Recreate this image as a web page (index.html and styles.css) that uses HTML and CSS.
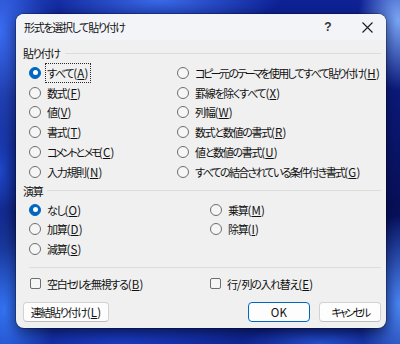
FILE: index.html
```html
<!DOCTYPE html>
<html lang="ja">

<head>
    <meta charset="UTF-8" />
    <title>形式を選択して貼り付け</title>
    <link rel="stylesheet" href="styles.css">
</head>

<body>
    <div class="dialog">
        <div class="titlebar">
            <span class="title">形式を選択して貼り付け</span>
            <span class="help">?</span>
            <span class="close">
                <svg width="11" height="11" viewBox="0 0 11 11">
                    <path d="M0.5 0.5 L10.5 10.5 M10.5 0.5 L0.5 10.5" stroke="#1b1b1b" stroke-width="1.1" fill="none" />
                </svg>
            </span>
        </div>

        <div class="content">
            <div class="group-head">貼り付け</div>
            <div class="paste-grid">
                <div class="opt"><span class="radio checked"></span><span class="focus">すべて<span class="key">(<u>A</u>)</span></span></div>
                <div class="opt"><span class="radio"></span><span>数式<span class="key">(<u>F</u>)</span></span></div>
                <div class="opt"><span class="radio"></span><span>値<span class="key">(<u>V</u>)</span></span></div>
                <div class="opt"><span class="radio"></span><span>書式<span class="key">(<u>T</u>)</span></span></div>
                <div class="opt"><span class="radio"></span><span><span class="kata">コメント</span>と<span class="kata">メモ</span><span class="key">(<u>C</u>)</span></span></div>
                <div class="opt"><span class="radio"></span><span>入力規則<span class="key">(<u>N</u>)</span></span></div>
                <div class="opt"><span class="radio"></span><span class="long"><span class="kata">コピー</span>元の<span class="kata">テーマ</span>を使用してすべて貼り付け<span class="key">(<u>H</u>)</span></span></div>
                <div class="opt"><span class="radio"></span><span>罫線を除くすべて<span class="key">(<u>X</u>)</span></span></div>
                <div class="opt"><span class="radio"></span><span>列幅<span class="key">(<u>W</u>)</span></span></div>
                <div class="opt"><span class="radio"></span><span>数式と数値の書式<span class="key">(<u>R</u>)</span></span></div>
                <div class="opt"><span class="radio"></span><span>値と数値の書式<span class="key">(<u>U</u>)</span></span></div>
                <div class="opt"><span class="radio"></span><span class="long">すべての結合されている条件付き書式<span class="key">(<u>G</u>)</span></span></div>
            </div>

            <div class="group-head op-head">演算</div>
            <div class="op-grid">
                <div class="opt"><span class="radio checked"></span><span>なし<span class="key">(<u>O</u>)</span></span></div>
                <div class="opt"><span class="radio"></span><span>加算<span class="key">(<u>D</u>)</span></span></div>
                <div class="opt"><span class="radio"></span><span>減算<span class="key">(<u>S</u>)</span></span></div>
                <div class="opt"><span class="radio"></span><span>乗算<span class="key">(<u>M</u>)</span></span></div>
                <div class="opt"><span class="radio"></span><span>除算<span class="key">(<u>I</u>)</span></span></div>
            </div>

            <div class="separator"></div>

            <div class="check-row">
                <div class="opt"><span class="checkbox"></span><span>空白<span class="kata">セル</span>を無視する<span class="key">(<u>B</u>)</span></span></div>
                <div class="opt"><span class="checkbox"></span><span>行<span class="key">/</span>列の入れ替え<span class="key">(<u>E</u>)</span></span></div>
            </div>

            <div class="button-row">
                <button class="btn link-btn">連結貼り付け<span class="key">(<u>L</u>)</span></button>
                <span class="spacer"></span>
                <button class="btn default"><span class="key">OK</span></button>
                <button class="btn"><span class="kata">キャンセル</span></button>
            </div>
        </div>
    </div>
</body>

</html>
```

FILE: styles.css
```css
* {
    box-sizing: border-box;
    margin: 0;
    padding: 0;
}

html,
body {
    width: 400px;
    height: 344px;
    overflow: hidden;
}

body {
    font-family: 'Noto Sans CJK JP', 'Noto Sans', sans-serif;
    font-feature-settings: "palt";
    font-size: 11px;
    letter-spacing: -1.3px;
    color: #111111;
    background-color: #0b1a72;
    background-image:
        radial-gradient(ellipse 60px 120px at 0px 30px, #3a6cf0 0%, rgba(40, 90, 230, 0) 100%),
        radial-gradient(ellipse 50px 100px at 4px 310px, #3474f4 0%, rgba(40, 90, 230, 0) 100%),
        radial-gradient(ellipse 30px 80px at 0px 170px, #1f47c8 0%, rgba(30, 70, 200, 0) 100%),
        radial-gradient(ellipse 40px 70px at 398px 20px, #7aa6f5 0%, rgba(80, 130, 240, 0) 100%),
        radial-gradient(ellipse 40px 90px at 400px 305px, #4a86f5 0%, rgba(60, 110, 240, 0) 100%),
        radial-gradient(ellipse 120px 30px at 160px 0px, #3a6ae8 0%, rgba(40, 90, 220, 0) 100%),
        radial-gradient(ellipse 160px 30px at 120px 344px, #1a3cc0 0%, rgba(20, 50, 180, 0) 100%),
        radial-gradient(ellipse 80px 20px at 320px 344px, #2450d0 0%, rgba(20, 50, 180, 0) 100%),
        linear-gradient(180deg, #0e2296 0%, #07105a 60%, #0c1f86 100%);
}

.dialog {
    margin: 14px 0 0 16px;
    width: 370px;
    height: 314px;
    border-radius: 8px;
    background: #f0f0f0;
    box-shadow: 0 4px 14px rgba(0, 0, 0, 0.45), 0 0 0 1px rgba(0, 0, 0, 0.25);
    overflow: hidden;
    display: flex;
    flex-direction: column;
}

.titlebar {
    height: 26px;
    background: #f3f4f8;
    display: flex;
    align-items: center;
    padding-left: 8px;
}

.title {
    flex: 1;
}

.help {
    width: 20px;
    text-align: center;
    font-family: 'Liberation Sans', sans-serif;
    font-size: 12px;
    font-weight: bold;
    letter-spacing: 0;
    color: #333333;
    margin-right: 18px;
}

.close {
    width: 22px;
    display: flex;
    justify-content: center;
    margin-right: 8px;
}

.content {
    flex: 1;
    padding: 5px 5px 0 7px;
    display: flex;
    flex-direction: column;
}

.group-head {
    height: 16px;
    line-height: 16px;
    display: flex;
    align-items: center;
}

.group-head::after {
    content: "";
    flex: 1;
    height: 1px;
    background: #dcdcdc;
    margin-left: 5px;
}

.paste-grid {
    margin-top: 2px;
    padding-left: 6px;
    display: grid;
    grid-template-columns: 148px 1fr;
    grid-template-rows: repeat(6, 19.8px);
    grid-auto-flow: column;
}

.op-head {
    margin-top: 1px;
}

.op-grid {
    margin-top: 1px;
    padding-left: 6px;
    display: grid;
    grid-template-columns: 181px 1fr;
    grid-template-rows: repeat(3, 19.7px);
    grid-auto-flow: column;
}

.opt {
    display: flex;
    align-items: center;
    white-space: nowrap;
}

.key {
    letter-spacing: 0.2px;
    font-size: 11.5px;
}

.kata {
    letter-spacing: -2.5px;
}

.long {
    letter-spacing: -1.7px;
}

.radio {
    width: 12px;
    height: 12px;
    border-radius: 50%;
    border: 1px solid #6e6e6e;
    background: #f6f6f6;
    margin-right: 6px;
    flex-shrink: 0;
    position: relative;
}

.radio.checked {
    background: #0067c0;
    border-color: #0067c0;
}

.radio.checked::after {
    content: "";
    position: absolute;
    left: 2.5px;
    top: 2.5px;
    width: 5px;
    height: 5px;
    border-radius: 50%;
    background: #ffffff;
}

.focus {
    outline: 1px dotted #2b2b2b;
    outline-offset: 1px;
}

u {
    text-underline-offset: 1px;
}

.separator {
    height: 1px;
    background: #dcdcdc;
    margin: 8px 0 0 6px;
}

.check-row {
    margin-top: 6px;
    padding-left: 7px;
    height: 20px;
    display: grid;
    grid-template-columns: 180px 1fr;
}

.checkbox {
    width: 11px;
    height: 11px;
    border: 1px solid #6e6e6e;
    border-radius: 2px;
    background: #f6f6f6;
    margin-right: 6px;
    flex-shrink: 0;
}

.button-row {
    margin-top: 8px;
    display: flex;
    gap: 9px;
}

.spacer {
    flex: 1;
}

.btn {
    height: 20px;
    width: 62px;
    font-family: inherit;
    font-feature-settings: "palt";
    font-size: 11px;
    letter-spacing: -1.3px;
    color: #111111;
    background: #fdfdfd;
    border: 1px solid #d2d2d2;
    border-bottom-color: #bdbdbd;
    border-radius: 4px;
}

.link-btn {
    width: 86px;
}

.btn.default {
    border: 1px solid #0067c0;
}
```
